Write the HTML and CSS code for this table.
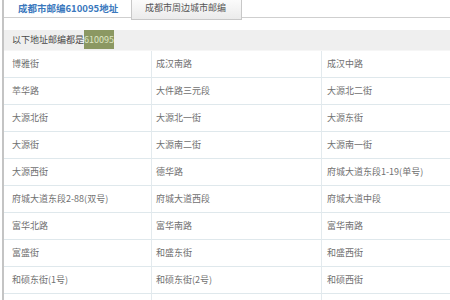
FILE: index.html
```html
<!DOCTYPE html>
<html lang="zh-CN">
<head>
<meta charset="utf-8">
<title>成都市邮编610095地址</title>
<link rel="stylesheet" href="styles.css">
</head>
<body>
<div class="page">
  <div class="tabs">
    <div class="tab tab-active">成都市邮编610095地址</div>
    <div class="tab tab-other">成都市周边城市邮编</div>
  </div>
  <div class="bar">以下地址邮编都是<span class="hl">610095</span></div>
  <div class="grid">
    <div class="cell c1">博雅街</div><div class="cell c2">成汉南路</div><div class="cell c3">成汉中路</div>
    <div class="cell c1">萃华路</div><div class="cell c2">大件路三元段</div><div class="cell c3">大源北二街</div>
    <div class="cell c1">大源北街</div><div class="cell c2">大源北一街</div><div class="cell c3">大源东街</div>
    <div class="cell c1">大源街</div><div class="cell c2">大源南二街</div><div class="cell c3">大源南一街</div>
    <div class="cell c1">大源西街</div><div class="cell c2">德华路</div><div class="cell c3">府城大道东段1-19(单号)</div>
    <div class="cell c1">府城大道东段2-88(双号)</div><div class="cell c2">府城大道西段</div><div class="cell c3">府城大道中段</div>
    <div class="cell c1">富华北路</div><div class="cell c2">富华南路</div><div class="cell c3">富华南路</div>
    <div class="cell c1">富盛街</div><div class="cell c2">和盛东街</div><div class="cell c3">和盛西街</div>
    <div class="cell c1">和硕东街(1号)</div><div class="cell c2">和硕东街(2号)</div><div class="cell c3">和硕西街</div>
    <div class="cell c1">和硕北路</div><div class="cell c2">和顺路</div><div class="cell c3">火花街</div>
  </div>
</div>
</body>
</html>
```
FILE: styles.css
```css
html, body {
  margin: 0;
  padding: 0;
  background: #ffffff;
  overflow: hidden;
}
body {
  font-family: "Noto Sans CJK SC", "Liberation Sans", sans-serif;
  font-size: 9px;
  color: #707070;
}
.page {
  margin-left: 2px;
  border-left: 2px solid #c4c4c4;
  height: 300px;
  overflow: hidden;
}
.tabs {
  display: flex;
  height: 17px;
  border-bottom: 1px solid #cfcfcf;
}
.tab {
  height: 18px;
  line-height: 16px;
  box-sizing: border-box;
  white-space: nowrap;
}
.tab-active {
  width: 127px;
  padding-left: 14px;
  font-size: 9.5px;
  font-weight: bold;
  color: #3a78bd;
}
.tab-other {
  width: 111px;
  height: 20px;
  padding-left: 13px;
  border: 1px solid #c8c8c8;
  border-top: none;
  background: linear-gradient(#fbfbfb, #ebebeb);
  color: #555555;
}
.bar {
  margin-top: 12px;
  height: 20px;
  line-height: 20px;
  padding-left: 8px;
  background: #efefef;
  color: #484848;
  border-bottom: 1px solid #f6f6f6;
}
.hl {
  background: #8b9862;
  color: #dfe7c6;
  padding: 3px 0 3px;
}
.grid {
  display: grid;
  grid-template-columns: 148px 170px 1fr;
}
.cell {
  height: 26px;
  line-height: 26px;
  border-bottom: 1px solid #dfe8ec;
  white-space: nowrap;
}
.c1 {
  padding-left: 8px;
  border-right: 1px solid #e3eaee;
}
.c2 {
  padding-left: 4px;
  border-right: 1px solid #e3eaee;
}
.c3 {
  padding-left: 5px;
}
```
